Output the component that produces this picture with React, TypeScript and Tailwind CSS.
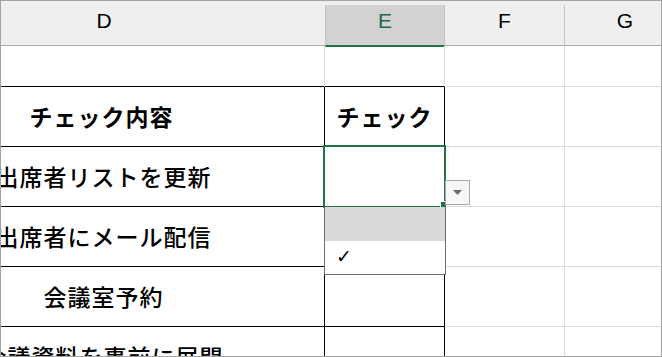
import React from "react";

const cols = "grid grid-cols-[442px_120px_120px_120px] -ml-[118px]";
const jp = "font-['Noto_Sans_CJK_JP','Noto_Sans',sans-serif]";

const rows = [
  { label: "チェック内容", head: true },
  { label: "出席者リストを更新" },
  { label: "出席者にメール配信" },
  { label: "会議室予約" },
  { label: "会議資料を事前に展開" },
];

export default function App() {
  return (
    <div className="w-[662px] h-[357px] bg-white border border-[#a3a3a3] overflow-hidden relative">
      {/* column headers */}
      <div className="h-[45px] pt-[4px] bg-[#efefef] border-b border-[#ababab]">
        <div className={`${cols} h-full font-['Liberation_Sans','Open_Sans',sans-serif] text-[21px] text-black`}>
          <div className="flex items-center justify-center pb-[10px]">D</div>
          <div className="flex items-center justify-center pb-[8px] bg-[#d2d2d2] border-x border-[#c4c4c4] border-b-2 border-b-[#217346] text-[#1e6b42]">
            E
          </div>
          <div className="flex items-center justify-center pb-[10px] border-r border-[#c4c4c4]">F</div>
          <div className="flex items-center justify-center pb-[10px]">G</div>
        </div>
      </div>

      {/* sheet body */}
      <div className={`${cols} ${jp} text-[23px] tracking-[1px] text-black`}>
        <div className="h-[41px] border-r border-[#dadada] border-b border-b-black" />
        <div className="h-[41px] border-r border-[#dadada] border-b border-b-black" />
        <div className="h-[41px] border-r border-b border-[#dadada]" />
        <div className="h-[41px] border-b border-[#dadada]" />

        {rows.map((r) => (
          <React.Fragment key={r.label}>
            <div
              className={`h-[60px] flex items-center justify-center whitespace-nowrap border-r border-b border-black ${
                r.head ? "font-bold pr-[4px]" : "font-medium"
              }`}
            >
              {r.label}
            </div>
            <div className="h-[60px] flex items-center justify-center font-bold border-r border-b border-black">
              {r.head ? "チェック" : ""}
            </div>
            <div className="h-[60px] border-r border-b border-[#dadada]" />
            <div className="h-[60px] border-b border-[#dadada]" />
          </React.Fragment>
        ))}
      </div>

      {/* selected cell */}
      <div className="absolute left-[322px] top-[144px] w-[123px] h-[63px] border-2 border-[#217346]" />
      <div className="absolute left-[439px] top-[200px] w-[7px] h-[7px] bg-white p-[1px]">
        <div className="w-full h-full bg-[#217346]" />
      </div>

      {/* dropdown button */}
      <div className="absolute left-[444px] top-[179px] w-[25px] h-[25px] bg-[#f7f7f7] border border-[#a9a9a9] flex items-center justify-center">
        <svg width="9" height="5" viewBox="0 0 9 5">
          <path d="M0 0h9L4.5 5z" fill="#6b6b6b" />
        </svg>
      </div>

      {/* dropdown list */}
      <div className="absolute left-[323px] top-[206px] w-[122px] h-[68px] bg-white border border-[#707070] border-t-0 flex flex-col">
        <div className="h-[34px] bg-[#d9d9d9]" />
        <div className="flex-1 flex items-center pl-[11px] pb-[2px] font-['DejaVu_Sans',sans-serif] text-[19px] text-black">
          ✓
        </div>
      </div>
    </div>
  );
}
